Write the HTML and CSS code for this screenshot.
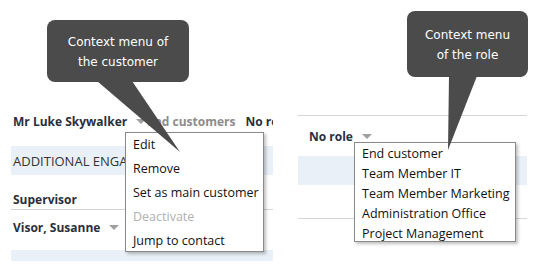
FILE: index.html
```html
<!DOCTYPE html>
<html lang="en">
<head>
  <meta charset="UTF-8">
  <title>Context menus</title>
  <link rel="stylesheet" href="styles.css">
</head>
<body>
  <div class="stage">
    <section class="panel panel-left">
      <div class="head-row">
        <span class="name">Mr Luke Skywalker</span>
        <span class="caret"></span>
        <span class="muted">End customers</span>
        <span class="name">No role</span>
      </div>
      <div class="band">ADDITIONAL ENGAGEMENTS</div>
      <div class="col-head">Supervisor</div>
      <div class="row">
        <span class="name">Visor, Susanne</span>
        <span class="caret"></span>
      </div>
      <div class="band band-thin"></div>
    </section>

    <section class="panel panel-right">
      <div class="table">
        <div class="role-row">
          <span class="name">No role</span>
          <span class="caret"></span>
        </div>
        <div class="band"></div>
        <div class="spacer"></div>
      </div>
    </section>

    <!-- menus -->
    <ul class="menu menu-customer">
      <li>Edit</li>
      <li>Remove</li>
      <li>Set as main customer</li>
      <li class="disabled">Deactivate</li>
      <li>Jump to contact</li>
    </ul>
    <ul class="menu menu-role">
      <li>End customer</li>
      <li>Team Member IT</li>
      <li>Team Member Marketing</li>
      <li>Administration Office</li>
      <li>Project Management</li>
    </ul>

    <!-- callouts -->
    <div class="callout callout-customer">Context menu of<br>the customer</div>
    <div class="callout callout-role">Context menu<br>of the role</div>
    <svg class="tails" width="540" height="273" viewBox="0 0 540 273">
      <polygon points="97,81 132,81 180,152" fill="#4b4b4b"/>
      <polygon points="449,76 477,76 448,150" fill="#4b4b4b"/>
    </svg>
  </div>
</body>
</html>
```

FILE: styles.css
```css
* {
  box-sizing: border-box;
  margin: 0;
  padding: 0;
}

body {
  background: #ffffff;
  font-family: 'Open Sans', 'Noto Sans', sans-serif;
  color: #2e2e2e;
}

.stage {
  position: relative;
  width: 540px;
  height: 273px;
  display: flex;
  overflow: hidden;
}

.panel {
  height: 273px;
  overflow: hidden;
}

.panel-left {
  width: 273px;
  padding-left: 11px;
}

.panel-right {
  flex: 1;
  padding: 115px 0 0 25px;
}

.name {
  font-weight: bold;
  font-size: 12px;
  color: #2a2f3a;
  white-space: nowrap;
}

.muted {
  font-weight: bold;
  font-size: 12px;
  color: #8c8c8c;
  white-space: nowrap;
  margin-left: 1px;
}

.caret {
  display: inline-block;
  width: 0;
  height: 0;
  border-left: 5px solid transparent;
  border-right: 5px solid transparent;
  border-top: 5px solid #a0a0a0;
  margin-left: 9px;
}

.head-row {
  display: flex;
  align-items: center;
  height: 18px;
  margin-top: 112px;
  padding-left: 2px;
  white-space: nowrap;
}

.head-row .muted + .name {
  margin-left: 10px;
}

.band {
  height: 29px;
  background: #eaf0f8;
  margin-top: 16px;
  padding-left: 2px;
  font-size: 13px;
  line-height: 31px;
  color: #333;
  white-space: nowrap;
}

.band-thin {
  height: 11px;
  margin-top: 6px;
}

.col-head {
  margin-top: 16px;
  height: 19px;
  padding-left: 2px;
  line-height: 18px;
  font-size: 12px;
  font-weight: bold;
  color: #2a2f3a;
  border-bottom: 1px solid #d6d6d6;
}

.row {
  display: flex;
  align-items: center;
  height: 34px;
  padding-left: 2px;
}

.table {
  width: 229px;
  border-top: 1px solid #d6d6d6;
  border-bottom: 1px solid #d6d6d6;
}

.role-row {
  display: flex;
  align-items: center;
  height: 40px;
  padding: 0 0 0 11px;
}

.table .band {
  margin-top: 0;
}

.spacer {
  height: 33px;
}

.menu {
  position: absolute;
  list-style: none;
  background: #fff;
  border: 1px solid #8a8a8a;
  box-shadow: 2px 2px 3px rgba(0, 0, 0, 0.25);
  font-size: 12.5px;
  color: #111;
  white-space: nowrap;
}

.menu li {
  padding-left: 7px;
}

.menu .disabled {
  color: #b0b0b0;
}

.menu-customer {
  left: 125px;
  top: 132px;
  width: 139px;
  height: 120px;
}

.menu-customer li {
  height: 24px;
  line-height: 24px;
}

.menu-role {
  left: 354px;
  top: 142px;
  width: 162px;
  height: 100px;
  padding-top: 1px;
}

.menu-role li {
  height: 20px;
  line-height: 20px;
}

.callout {
  position: absolute;
  background: #4b4b4b;
  color: #fff;
  border-radius: 8px;
  text-align: center;
  font-family: 'DejaVu Sans', sans-serif;
  font-size: 12px;
  line-height: 20px;
}

.callout-customer {
  left: 47px;
  top: 20px;
  width: 142px;
  height: 62px;
  padding-top: 12px;
}

.callout-role {
  left: 407px;
  top: 11px;
  width: 121px;
  height: 66px;
  padding-top: 14px;
}

.tails {
  position: absolute;
  left: 0;
  top: 0;
  pointer-events: none;
}
```
